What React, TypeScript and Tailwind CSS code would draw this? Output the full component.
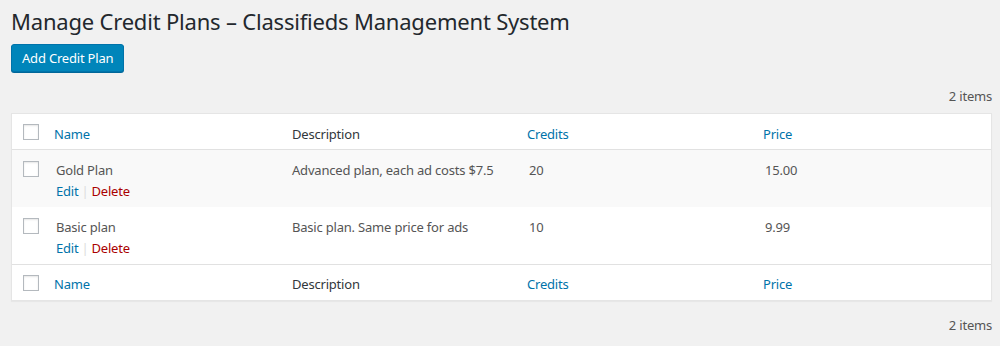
import React from 'react';

type Plan = { id: number; name: string; description: string; credits: string; price: string };

const plans: Plan[] = [
  { id: 1, name: 'Gold Plan', description: 'Advanced plan, each ad costs $7.5', credits: '20', price: '15.00' },
  { id: 2, name: 'Basic plan', description: 'Basic plan. Same price for ads', credits: '10', price: '9.99' },
];

const cols = 'grid grid-cols-[34px_236px_237px_236px_1fr]';

function CheckBox() {
  return (
    <span className="block w-4 h-4 bg-white border border-[#b4b9be] shadow-[inset_0_1px_2px_rgba(0,0,0,0.1)]" />
  );
}

function HeaderRow({ footer }: { footer?: boolean }) {
  const pad = footer ? 'pt-[9px]' : 'pt-[10px]';
  return (
    <div
      className={`${cols} h-[36px] text-[13px] leading-[20px] ${
        footer ? 'border-t border-[#e1e1e1]' : 'border-b border-[#e1e1e1]'
      }`}
    >
      <div className="pt-[10px] pl-[11px]">
        <CheckBox />
      </div>
      <div className={`${pad} pl-2 text-[#0073aa]`}>Name</div>
      <div className={`${pad} pl-[10px] text-[#32373c]`}>Description</div>
      <div className={`${pad} pl-2 text-[#0073aa]`}>Credits</div>
      <div className={`${pad} pl-2 text-[#0073aa]`}>Price</div>
    </div>
  );
}

function PlanRow({ plan, striped }: { plan: Plan; striped: boolean }) {
  return (
    <div className={`${cols} h-[57px] text-[13px] leading-[20px] text-[#555] ${striped ? 'bg-[#f9f9f9]' : 'bg-white'}`}>
      <div className="pt-[11px] pl-[11px]">
        <CheckBox />
      </div>
      <div className="pt-[10px] pl-[10px]">
        <div>{plan.name}</div>
        <div className="pt-[1px]">
          <span className="text-[#0073aa]">Edit</span>
          <span className="text-[#ddd] px-[3px]">|</span>
          <span className="text-[#a00]">Delete</span>
        </div>
      </div>
      <div className="pt-[10px] pl-[10px]">{plan.description}</div>
      <div className="pt-[10px] pl-[10px]">{plan.credits}</div>
      <div className="pt-[10px] pl-[10px]">{plan.price}</div>
    </div>
  );
}

export default function App() {
  return (
    <div className="min-h-[346px] bg-[#f1f1f1] pl-[11px] pr-[8px] font-['Noto_Sans',sans-serif] tracking-[-0.2px]">
      <h1 className="pt-[6px] text-[22px] leading-[30px] font-normal tracking-[-0.2px] text-[#23282d]">
        Manage Credit Plans – Classifieds Management System
      </h1>
      <button className="mt-[8px] h-[28px] px-[10px] pb-[1px] text-[13px] leading-[26px] text-white bg-[#0085ba] border border-[#0073aa] rounded-[3px] shadow-[0_1px_0_#006799]">
        Add Credit Plan
      </button>
      <div className="mt-[14px] text-right text-[13px] leading-[20px] text-[#555]">2 items</div>
      <div className="mt-[7px] bg-white border border-[#e5e5e5] shadow-[0_1px_1px_rgba(0,0,0,0.04)]">
        <HeaderRow />
        {plans.map((p, i) => (
          <PlanRow key={p.id} plan={p} striped={i % 2 === 0} />
        ))}
        <HeaderRow footer />
      </div>
      <div className="mt-[14px] text-right text-[13px] leading-[20px] text-[#555]">2 items</div>
    </div>
  );
}
